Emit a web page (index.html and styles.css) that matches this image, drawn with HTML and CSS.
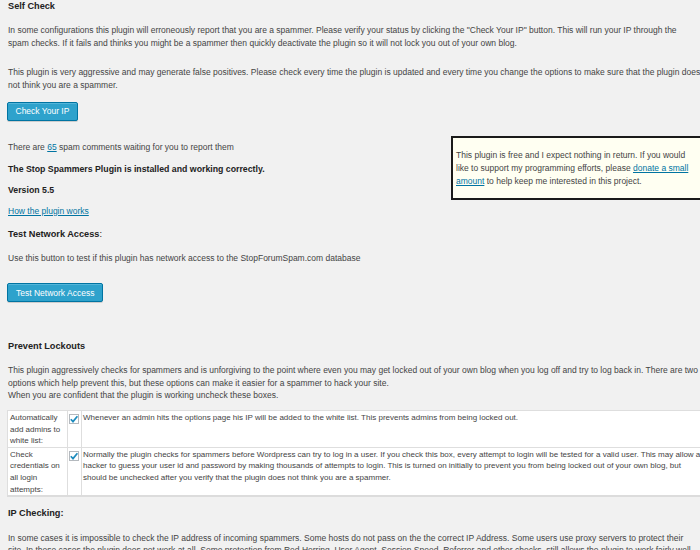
FILE: index.html
```html
<!DOCTYPE html>
<html>
<head>
<meta charset="utf-8">
<title>Stop Spammers</title>
<link rel="stylesheet" href="styles.css">
</head>
<body>
<div class="page">
  <h3 class="h h-self">Self Check</h3>
  <p class="p p-intro">In some configurations this plugin will erroneously report that you are a spammer. Please verify your status by clicking the "Check Your IP" button. This will run your IP through the<br>spam checks. If it fails and thinks you might be a spammer then quickly deactivate the plugin so it will not lock you out of your own blog.</p>
  <p class="p p-aggr">This plugin is very aggressive and may generate false positives. Please check every time the plugin is updated and every time you change the options to make sure that the plugin does<br>not think you are a spammer.</p>
  <button class="btn btn-check" type="button">Check Your IP</button>
  <div class="donate">
    <p class="donate-text">This plugin is free and I expect nothing in return. If you would<br>like to support my programming efforts, please <a href="#">donate a small<br>amount</a> to help keep me interested in this project.</p>
  </div>
  <p class="p p-spam">There are <a href="#">65</a> spam comments waiting for you to report them</p>
  <p class="b p-ok">The Stop Spammers Plugin is installed and working correctly.</p>
  <p class="b p-ver">Version 5.5</p>
  <p class="p p-how"><a href="#">How the plugin works</a></p>
  <h3 class="h h-net">Test Network Access<span class="colon">:</span></h3>
  <p class="p p-use">Use this button to test if this plugin has network access to the StopForumSpam.com database</p>
  <button class="btn btn-net" type="button">Test Network Access</button>
  <h3 class="h h-prev">Prevent Lockouts</h3>
  <p class="p p-lock">This plugin aggressively checks for spammers and is unforgiving to the point where even you may get locked out of your own blog when you log off and try to log back in. There are two<br>options which help prevent this, but these options can make it easier for a spammer to hack your site.<br>When you are confident that the plugin is working uncheck these boxes.</p>
  <table class="opts">
    <colgroup><col class="c1"><col class="c2"><col class="c3"></colgroup>
    <tr>
      <td class="lbl">Automatically add admins to white list:</td>
      <td class="chk"><span class="cb"><svg viewBox="0 0 10 10" width="10" height="10"><path d="M1.8 5.2 L4 7.6 L8.4 2.2" fill="none" stroke="#1e8cbe" stroke-width="1.7"/></svg></span></td>
      <td class="desc">Whenever an admin hits the options page his IP will be added to the white list. This prevents admins from being locked out.</td>
    </tr>
    <tr>
      <td class="lbl">Check credentials on all login attempts:</td>
      <td class="chk"><span class="cb"><svg viewBox="0 0 10 10" width="10" height="10"><path d="M1.8 5.2 L4 7.6 L8.4 2.2" fill="none" stroke="#1e8cbe" stroke-width="1.7"/></svg></span></td>
      <td class="desc">Normally the plugin checks for spammers before Wordpress can try to log in a user. If you check this box, every attempt to login will be tested for a valid user. This may allow a<br>hacker to guess your user id and password by making thousands of attempts to login. This is turned on initially to prevent you from being locked out of your own blog, but<br>should be unchecked after you verify that the plugin does not think you are a spammer.</td>
    </tr>
  </table>
  <h3 class="h h-ip">IP Checking:</h3>
  <p class="p p-ip">In some cases it is impossible to check the IP address of incoming spammers. Some hosts do not pass on the the correct IP Address. Some users use proxy servers to protect their<br>site. In these cases the plugin does not work at all. Some protection from Red Herring, User Agent, Session Speed, Referrer and other checks, still allows the plugin to work fairly well.</p>
</div>
</body>
</html>
```
FILE: styles.css
```css
html {
  overflow: hidden;
  background: #f1f1f1;
}
body {
  margin: 0;
  background: #f1f1f1;
  color: #444;
  font-family: "Liberation Sans", Arial, sans-serif;
}
.page {
  width: 712px;
  padding-left: 8px;
  white-space: nowrap;
}
.h, .p, .b {
  margin: 0;
  line-height: 13px;
}
.h {
  font-size: 9.2px;
  font-weight: bold;
  color: #222;
}
.b {
  font-size: 8.75px;
  font-weight: bold;
  color: #222;
}
.p {
  font-size: 8.5px;
}
a {
  color: #0074a2;
  text-decoration: underline;
}
.colon {
  font-weight: normal;
}
.h-self { margin-top: 0; }
.p-intro { margin-top: 11px; line-height: 13.3px; }
.p-aggr { margin-top: 15.4px; line-height: 13.3px; }
.btn {
  display: block;
  width: fit-content;
  height: 19px;
  margin: 9.4px 0 0 -1px;
  padding: 0 7.5px;
  border: 1px solid #0074a2;
  border-radius: 2px;
  background: #2ea2cc;
  box-shadow: inset 0 1px 0 rgba(120, 200, 230, 0.5), 0 1px 0 rgba(0, 0, 0, 0.15);
  color: #fff;
  font-family: "Liberation Sans", Arial, sans-serif;
  font-size: 8.5px;
  line-height: 16px;
}
.btn-net {
  padding: 0 8px;
}
.donate {
  float: right;
  width: 240px;
  margin: 15px 18px 0 0;
  padding: 11.4px 4px 11px 3px;
  border: 2px solid #1a1a1a;
  background: #fffff2;
}
.donate-text {
  margin: 0;
  font-size: 8.5px;
  line-height: 12.6px;
}
.p-spam { margin-top: 20.3px; }
.p-ok { margin-top: 8.7px; }
.p-ver { margin-top: 8px; }
.p-how { margin-top: 7.7px; }
.h-net { margin-top: 10px; }
.p-use { margin-top: 11px; }
.btn-net { margin-top: 18.5px; }
.h-prev { margin-top: 38.2px; }
.p-lock { margin-top: 10.8px; line-height: 12.5px; }
.opts {
  width: 712px;
  margin: 8.8px 0 0 -1px;
  border-collapse: collapse;
  table-layout: fixed;
  background: #fff;
  border-bottom: 2px solid #dcdcdc;
  font-size: 8px;
  line-height: 11.7px;
}
.c1 { width: 60px; }
.c2 { width: 14px; }
.opts td {
  border: 1px solid #dedede;
  padding: 0.5px 1px 0 2px;
  vertical-align: top;
  white-space: normal;
}
.opts .desc {
  white-space: nowrap;
  padding-left: 1px;
}
.opts .chk {
  padding: 0;
}
.cb {
  display: block;
  width: 10px;
  height: 10px;
  margin: 3px 0 0 1px;
  border: 1px solid #b4b9be;
  background: #fff;
  box-sizing: border-box;
  position: relative;
}
.cb svg {
  position: absolute;
  left: -1px;
  top: -1px;
}
.h-ip { margin-top: 10px; }
.p-ip { margin-top: 11.2px; line-height: 12.5px; }
```
